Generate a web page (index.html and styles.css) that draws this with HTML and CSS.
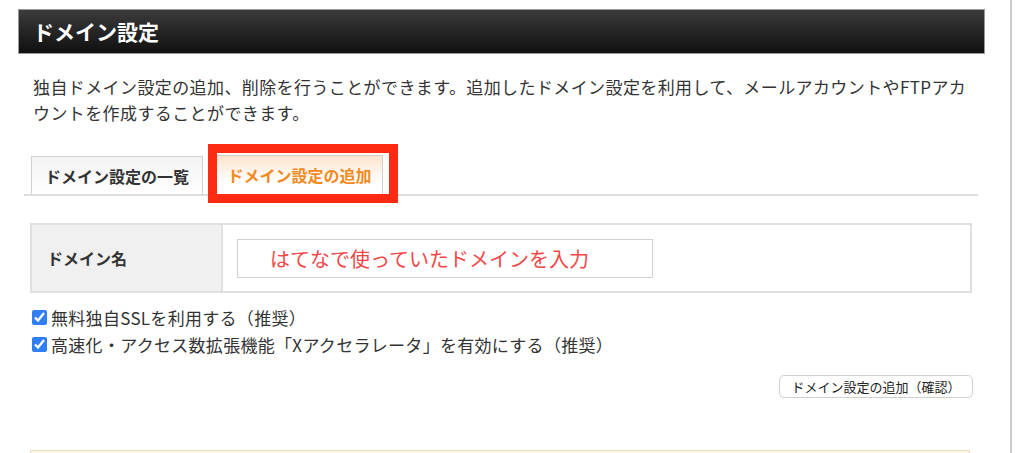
FILE: index.html
```html
<!DOCTYPE html>
<html lang="ja">
<head>
    <meta charset="UTF-8">
    <meta name="viewport" content="width=device-width, initial-scale=1.0">
    <title>ドメイン設定</title>
    <link rel="stylesheet" href="styles.css">
</head>
<body>
    <div class="page">
        <div class="main">
            <h2 class="title">ドメイン設定</h2>

            <p class="lead">独自ドメイン設定の追加、削除を行うことができます。追加したドメイン設定を利用して、メールアカウントやFTPアカウントを作成することができます。</p>

            <div class="tabs">
                <a class="tab" href="#">ドメイン設定の一覧</a>
                <a class="tab active" href="#">ドメイン設定の追加<span class="mark"></span></a>
            </div>

            <form id="domainForm">
                <table class="form-table">
                    <tr>
                        <th>ドメイン名</th>
                        <td><input type="text" class="domain-input" name="domain" value="はてなで使っていたドメインを入力"></td>
                    </tr>
                </table>

                <div class="options">
                    <label class="check"><input type="checkbox" name="ssl" checked> 無料独自SSLを利用する（推奨）</label>
                    <label class="check"><input type="checkbox" name="xaccel" checked> 高速化・アクセス数拡張機能「Xアクセラレータ」を有効にする（推奨）</label>
                </div>

                <div class="actions">
                    <button type="submit" class="btn">ドメイン設定の追加（確認）</button>
                </div>
            </form>

            <div class="notice"></div>
        </div>
    </div>
</body>
</html>
```

FILE: styles.css
```css
body {
    margin: 0;
    font-family: "Noto Sans CJK JP", "Noto Sans", sans-serif;
    color: #333;
    background-color: #fff;
}
.page {
    width: 1010px;
    min-height: 453px;
    border-right: 2px solid #cccccc;
    overflow: hidden;
}
.main {
    width: 967px;
    padding: 9px 0 0 18px;
}
.title {
    margin: 0;
    height: 43px;
    line-height: 43px;
    padding-left: 14px;
    font-size: 21px;
    font-weight: bold;
    color: #fff;
    background: linear-gradient(#3b3b3b, #101010);
    border: 1px solid #999;
}
.lead {
    margin: 20px 0 0 15px;
    width: 945px;
    font-size: 17px;
    line-height: 26px;
    letter-spacing: 0.4px;
    color: #333;
}
.tabs {
    display: flex;
    align-items: flex-end;
    gap: 13px;
    margin: 29px 0 0 6px;
    padding-left: 7px;
    width: 947px;
    border-bottom: 2px solid #dcdcdc;
}
.tab {
    display: block;
    box-sizing: border-box;
    height: 38px;
    line-height: 38px;
    width: 172px;
    text-align: center;
    font-size: 16px;
    font-weight: bold;
    color: #333;
    text-decoration: none;
    background: linear-gradient(#f3f3f3, #fff);
    border: 1px solid #d0d0d0;
    border-bottom: none;
}
.tab.active {
    position: relative;
    width: 167px;
    height: 39px;
    color: #f28a1e;
    background: linear-gradient(#fde4cf, #fff 70%);
}
.mark {
    position: absolute;
    left: -9px;
    top: -12px;
    right: -16px;
    bottom: -9px;
    border: 9px solid #ff2a12;
}
.form-table {
    margin: 27px 0 0 12px;
    width: 942px;
    height: 70px;
    table-layout: fixed;
    border-collapse: collapse;
    border: 2px solid #e0e0e0;
}
.form-table th {
    width: 174px;
    padding: 0 0 0 15px;
    text-align: left;
    font-size: 16px;
    font-weight: bold;
    color: #333;
    background-color: #f0f0f0;
    border-right: 2px solid #e0e0e0;
}
.form-table td {
    padding: 0 0 0 14px;
}
.domain-input {
    box-sizing: border-box;
    width: 416px;
    height: 39px;
    padding: 0 0 0 32px;
    border: 1px solid #d0d0d0;
    font-family: inherit;
    font-size: 20px;
    color: #f04848;
    outline: none;
}
.options {
    margin: 11px 0 0 13px;
}
.check {
    display: flex;
    align-items: center;
    height: 27px;
    font-size: 17px;
    letter-spacing: 0.3px;
    color: #333;
}
.check input {
    width: 15px;
    height: 15px;
    margin: 0 4px 0 1px;
    accent-color: #2f7ef6;
}
.actions {
    margin-top: 15px;
    padding-right: 12px;
    text-align: right;
}
.btn {
    height: 23px;
    width: 194px;
    padding: 0;
    font-family: inherit;
    font-size: 13px;
    color: #222;
    background-color: #fff;
    border: 1px solid #cfcfcf;
    border-radius: 5px;
    cursor: pointer;
}
.notice {
    margin: 52px 0 0 12px;
    width: 938px;
    height: 60px;
    background-color: #fdf8ea;
    border: 1px solid #e8dcc4;
}
```
